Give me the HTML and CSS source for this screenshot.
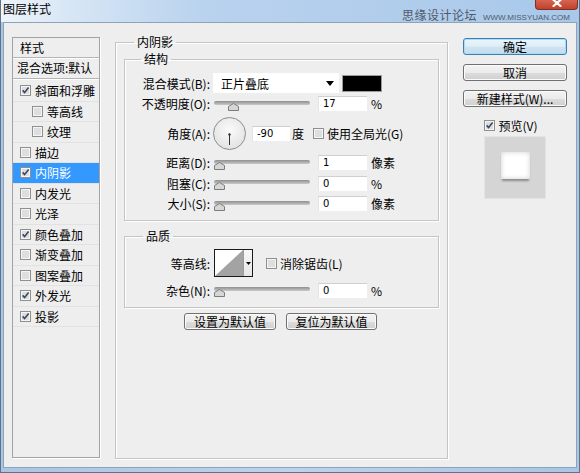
FILE: index.html
```html
<!DOCTYPE html>
<html lang="zh-CN">
<head>
<meta charset="utf-8">
<title>图层样式</title>
<link rel="stylesheet" href="styles.css">
</head>
<body>
<div class="window">
  <div class="titlebar">
    <span class="title">图层样式</span>
    <span class="wm"><span class="wm-cn">思缘设计论坛</span><span class="wm-en">WWW.MISSYUAN.COM</span></span>
    <div class="close"><svg width="12" height="8" viewBox="0 0 12 8"><path d="M2.5 1 L9.5 7 M9.5 1 L2.5 7" stroke="#fff" stroke-width="2.2" stroke-linecap="round"/></svg></div>
  </div>
  <div class="client">
    <div class="styles-panel">
      <div class="sp-head">样式</div>
      <div class="sp-blend">混合选项:默认</div>
      <ul class="sp-list">
        <li><svg class="cb" viewBox="0 0 11 11"><rect x=".5" y=".5" width="10" height="10" fill="#f5f5f5" stroke="#8e8f8f"/><rect x="2" y="2" width="7" height="7" fill="#dedede"/><path d="M2.6 5.4 L4.6 7.6 L8.6 2.6" fill="none" stroke="#3b4a66" stroke-width="1.6"/></svg>斜面和浮雕</li>
        <li class="sub"><svg class="cb" viewBox="0 0 11 11"><rect x=".5" y=".5" width="10" height="10" fill="#f5f5f5" stroke="#8e8f8f"/><rect x="2" y="2" width="7" height="7" fill="#dedede"/></svg>等高线</li>
        <li class="sub"><svg class="cb" viewBox="0 0 11 11"><rect x=".5" y=".5" width="10" height="10" fill="#f5f5f5" stroke="#8e8f8f"/><rect x="2" y="2" width="7" height="7" fill="#dedede"/></svg>纹理</li>
        <li><svg class="cb" viewBox="0 0 11 11"><rect x=".5" y=".5" width="10" height="10" fill="#f5f5f5" stroke="#8e8f8f"/><rect x="2" y="2" width="7" height="7" fill="#dedede"/></svg>描边</li>
        <li class="sel"><svg class="cb" viewBox="0 0 11 11"><rect x=".5" y=".5" width="10" height="10" fill="#f5f5f5" stroke="#8e8f8f"/><rect x="2" y="2" width="7" height="7" fill="#dedede"/><path d="M2.6 5.4 L4.6 7.6 L8.6 2.6" fill="none" stroke="#3b4a66" stroke-width="1.6"/></svg>内阴影</li>
        <li><svg class="cb" viewBox="0 0 11 11"><rect x=".5" y=".5" width="10" height="10" fill="#f5f5f5" stroke="#8e8f8f"/><rect x="2" y="2" width="7" height="7" fill="#dedede"/></svg>内发光</li>
        <li><svg class="cb" viewBox="0 0 11 11"><rect x=".5" y=".5" width="10" height="10" fill="#f5f5f5" stroke="#8e8f8f"/><rect x="2" y="2" width="7" height="7" fill="#dedede"/></svg>光泽</li>
        <li><svg class="cb" viewBox="0 0 11 11"><rect x=".5" y=".5" width="10" height="10" fill="#f5f5f5" stroke="#8e8f8f"/><rect x="2" y="2" width="7" height="7" fill="#dedede"/><path d="M2.6 5.4 L4.6 7.6 L8.6 2.6" fill="none" stroke="#3b4a66" stroke-width="1.6"/></svg>颜色叠加</li>
        <li><svg class="cb" viewBox="0 0 11 11"><rect x=".5" y=".5" width="10" height="10" fill="#f5f5f5" stroke="#8e8f8f"/><rect x="2" y="2" width="7" height="7" fill="#dedede"/></svg>渐变叠加</li>
        <li><svg class="cb" viewBox="0 0 11 11"><rect x=".5" y=".5" width="10" height="10" fill="#f5f5f5" stroke="#8e8f8f"/><rect x="2" y="2" width="7" height="7" fill="#dedede"/></svg>图案叠加</li>
        <li><svg class="cb" viewBox="0 0 11 11"><rect x=".5" y=".5" width="10" height="10" fill="#f5f5f5" stroke="#8e8f8f"/><rect x="2" y="2" width="7" height="7" fill="#dedede"/><path d="M2.6 5.4 L4.6 7.6 L8.6 2.6" fill="none" stroke="#3b4a66" stroke-width="1.6"/></svg>外发光</li>
        <li><svg class="cb" viewBox="0 0 11 11"><rect x=".5" y=".5" width="10" height="10" fill="#f5f5f5" stroke="#8e8f8f"/><rect x="2" y="2" width="7" height="7" fill="#dedede"/><path d="M2.6 5.4 L4.6 7.6 L8.6 2.6" fill="none" stroke="#3b4a66" stroke-width="1.6"/></svg>投影</li>
      </ul>
    </div>

    <fieldset class="group outer">
      <legend>内阴影</legend>
      <fieldset class="group inner struct">
        <legend>结构</legend>
        <div class="row r20">
          <span class="lbl">混合模式(B):</span>
          <div class="select"><span>正片叠底</span><svg width="8" height="5" viewBox="0 0 8 5"><path d="M0 0 H8 L4 5 Z" fill="#000"/></svg></div>
          <span class="swatch"></span>
        </div>
        <div class="row r21">
          <span class="lbl">不透明度(O):</span>
          <div class="slider"><div class="track"></div><svg class="thumb" style="left:14px" width="11" height="8" viewBox="0 0 11 8"><path d="M5.5 .5 L10.5 3.5 V7.5 H.5 V3.5 Z" fill="#d6d6d6" stroke="#7c7c7c"/></svg></div>
          <span class="num">17</span><span class="unit">%</span>
        </div>
        <div class="row r38">
          <span class="lbl">角度(A):</span>
          <div class="dial"><svg width="33" height="33" viewBox="0 0 33 33"><defs><radialGradient id="dg" cx="50%" cy="40%" r="60%"><stop offset="0" stop-color="#fbfbfb"/><stop offset="1" stop-color="#e2e2e2"/></radialGradient></defs><circle cx="16.5" cy="16.5" r="16" fill="url(#dg)" stroke="#8d8d8d"/><path d="M16.5 17.5 V28" stroke="#333" stroke-width="1"/><circle cx="16.5" cy="17.5" r="1.2" fill="#333"/></svg></div>
          <span class="num deg">-90</span><span class="unit u2">度</span>
          <svg class="cb cb-g" viewBox="0 0 11 11"><rect x=".5" y=".5" width="10" height="10" fill="#f5f5f5" stroke="#8e8f8f"/><rect x="2" y="2" width="7" height="7" fill="#dedede"/></svg><span class="cb-text">使用全局光(G)</span>
        </div>
        <div class="row r21">
          <span class="lbl">距离(D):</span>
          <div class="slider"><div class="track"></div><svg class="thumb" style="left:0px" width="11" height="8" viewBox="0 0 11 8"><path d="M5.5 .5 L10.5 3.5 V7.5 H.5 V3.5 Z" fill="#d6d6d6" stroke="#7c7c7c"/></svg></div>
          <span class="num">1</span><span class="unit">像素</span>
        </div>
        <div class="row r20">
          <span class="lbl">阻塞(C):</span>
          <div class="slider"><div class="track"></div><svg class="thumb" style="left:0px" width="11" height="8" viewBox="0 0 11 8"><path d="M5.5 .5 L10.5 3.5 V7.5 H.5 V3.5 Z" fill="#d6d6d6" stroke="#7c7c7c"/></svg></div>
          <span class="num">0</span><span class="unit">%</span>
        </div>
        <div class="row r21">
          <span class="lbl">大小(S):</span>
          <div class="slider"><div class="track"></div><svg class="thumb" style="left:0px" width="11" height="8" viewBox="0 0 11 8"><path d="M5.5 .5 L10.5 3.5 V7.5 H.5 V3.5 Z" fill="#d6d6d6" stroke="#7c7c7c"/></svg></div>
          <span class="num">0</span><span class="unit">像素</span>
        </div>
      </fieldset>

      <fieldset class="group inner quality">
        <legend>品质</legend>
        <div class="row r28">
          <span class="lbl">等高线:</span>
          <div class="contour">
            <svg class="curve" width="28" height="26" viewBox="0 0 28 26"><rect width="28" height="26" fill="#fff"/><path d="M0 26 L28 0 V26 Z" fill="#a3a3a3"/></svg>
            <div class="drop"><svg width="5" height="3" viewBox="0 0 5 3"><path d="M0 0 H5 L2.5 3 Z" fill="#000"/></svg></div>
          </div>
          <svg class="cb cb-aa" viewBox="0 0 11 11"><rect x=".5" y=".5" width="10" height="10" fill="#f5f5f5" stroke="#8e8f8f"/><rect x="2" y="2" width="7" height="7" fill="#dedede"/></svg><span class="cb-text">消除锯齿(L)</span>
        </div>
        <div class="row r20 noise">
          <span class="lbl">杂色(N):</span>
          <div class="slider"><div class="track"></div><svg class="thumb" style="left:0px" width="11" height="8" viewBox="0 0 11 8"><path d="M5.5 .5 L10.5 3.5 V7.5 H.5 V3.5 Z" fill="#d6d6d6" stroke="#7c7c7c"/></svg></div>
          <span class="num">0</span><span class="unit">%</span>
        </div>
      </fieldset>

      <div class="defaults">
        <button class="btn w92">设置为默认值</button>
        <button class="btn w91">复位为默认值</button>
      </div>
    </fieldset>

    <div class="side">
      <button class="btn side-btn primary">确定</button>
      <button class="btn side-btn">取消</button>
      <button class="btn side-btn">新建样式(W)...</button>
      <div class="preview-check">
        <svg class="cb" viewBox="0 0 11 11"><rect x=".5" y=".5" width="10" height="10" fill="#f5f5f5" stroke="#8e8f8f"/><rect x="2" y="2" width="7" height="7" fill="#dedede"/><path d="M2.6 5.4 L4.6 7.6 L8.6 2.6" fill="none" stroke="#3b4a66" stroke-width="1.6"/></svg><span>预览(V)</span>
      </div>
      <div class="preview"><div class="preview-sq"></div></div>
    </div>
  </div>
</div>
</body>
</html>
```
FILE: styles.css
```css
* { box-sizing: border-box; }
html, body { margin: 0; padding: 0; }
body {
  width: 580px; height: 473px; overflow: hidden;
  font-family: "Noto Sans CJK SC", "Noto Sans", sans-serif;
  font-size: 12px; color: #000;
}
.window {
  width: 580px; height: 473px;
  background: linear-gradient(90deg, #aac6e4, #bcd3ec 50%, #a9c6e6);
  display: flex; flex-direction: column;
  border-left: 1px solid #5e7288; border-right: 1px solid #5e7288;
  border-bottom: 1px solid #5e7288;
}
.titlebar {
  position: relative;
  height: 22px; flex: none;
  display: flex; align-items: flex-start;
  background: linear-gradient(90deg, #eef4fa 0%, #d7e6f5 12%, #b9d2ee 35%, #a9c8ea 100%);
}
.title { padding-left: 2px; line-height: 18px; font-size: 12px; color: #000; }
.wm {
  position: relative; z-index: 1;
  margin-left: auto; margin-right: 9px; margin-top: 8px;
  display: flex; align-items: baseline; gap: 6px;
}
.wm-cn { font-size: 12px; line-height: 14px; color: #4f5a68; letter-spacing: 0.5px; }
.wm-en { font-family: "Liberation Sans", Arial, sans-serif; font-size: 8px; color: #4f5a68; }
.close {
  position: absolute; right: 1px; top: -9px;
  width: 43px; height: 19px;
  border: 1px solid #7a3126; border-top: none;
  border-radius: 0 0 4px 4px;
  background: linear-gradient(#e9a597, #d3614c 55%, #c2402b);
  display: flex; align-items: flex-end; justify-content: center; padding-bottom: 2px;
}
.client {
  flex: 1;
  margin: 0 2px 4px 2px;
  background: #eeeeee;
  border: 1px solid #8ea2b8;
  display: flex; align-items: flex-start;
  padding: 12px 0 0 8px;
}

/* left styles list */
.styles-panel {
  width: 88px; height: 421px; margin-top: 2px;
  border: 1px solid #a3a3a3;
  box-shadow: 1px 1px 0 #fff;
  background: #eeeeee;
}
.sp-head {
  height: 20px; line-height: 19px; padding-left: 7px;
  border-bottom: 1px solid #b5b5b5;
  box-shadow: 0 1px 0 #fff;
}
.sp-blend {
  height: 21px; line-height: 20px; padding-left: 4px;
  border-bottom: 1px solid #b5b5b5;
  box-shadow: 0 1px 0 #fff;
  white-space: nowrap;
}
.sp-list { list-style: none; margin: 0; padding: 2px 0 0; }
.sp-list li {
  height: 20.5px;
  display: flex; align-items: center;
  padding-left: 7px;
  border-bottom: 1px solid #e2e2e2;
  white-space: nowrap;
}
.sp-list li.sub { padding-left: 19px; }
.sp-list li.sel { background: #3399ff; color: #fff; }
.cb { width: 11px; height: 11px; flex: none; margin-right: 4px; }

/* group boxes */
.group {
  margin: 0; padding: 0;
  border: 1px solid #c4c4c4;
  box-shadow: 1px 1px 0 #fff, inset 1px 1px 0 #fff;
  min-inline-size: 0;
}
.group legend { padding: 0 3px; line-height: 14px; font-size: 12px; }
.outer {
  width: 333px; height: 424px; margin-left: 15px;
  padding: 3px 0 0 8px;
}
.outer > legend { margin-left: 10px; }
.inner { width: 315px; }
.inner > legend { margin-left: 16px; }
.struct { padding: 7px 0 6px 0; }
.quality { margin-top: 8px; padding: 6px 0 7px 0; }
.quality > legend { margin-left: 18px; }

.row { display: flex; align-items: center; }
.r20 { height: 20px; }
.r21 { height: 21px; }
.r28 { height: 28px; }
.r38 { height: 38px; }
.noise { margin-top: 3px; }
.lbl { width: 85px; text-align: right; white-space: nowrap; flex: none; }

.select {
  margin-left: 3px; width: 126px; height: 20px;
  background: #fff;
  display: flex; align-items: center; justify-content: space-between;
  padding: 0 5px 0 8px;
}
.swatch {
  margin-left: 3px; width: 40px; height: 17px;
  background: #000; border: 1px solid #9a9a9a;
}
.slider { position: relative; margin-left: 4px; width: 96px; height: 14px; }
.track {
  margin-top: 4px; height: 4px; border-radius: 2px;
  background: linear-gradient(#8f8f8f, #c9c9c9);
}
.thumb { position: absolute; top: 6px; }
.num {
  margin-left: 8px; width: 49px; height: 15px;
  background: #fff; border-top: 1px solid #cfcfcf; border-left: 1px solid #e4e4e4;
  font-family: "DejaVu Sans", sans-serif; font-size: 10px; line-height: 14px;
  padding-left: 4px;
}
.unit { margin-left: 4px; font-family: "DejaVu Sans", "Noto Sans CJK SC", sans-serif; font-size: 11px; }
.unit:last-child { font-family: "Noto Sans CJK SC", sans-serif; font-size: 12px; }
.dial { margin-left: 3px; width: 33px; height: 33px; }
.dial svg { display: block; }
.num.deg { margin-left: 6px; width: 38px; }
.u2 { margin-left: 2px; font-family: "Noto Sans CJK SC", sans-serif; font-size: 12px; }
.cb-g { margin-left: 9px; margin-right: 3px; }
.cb-text { white-space: nowrap; }

.contour {
  margin-left: 4px; width: 39px; height: 28px;
  border: 1px solid #1a1a1a;
  display: flex; background: #fff;
}
.curve { display: block; }
.drop {
  flex: 1; border-left: 1px solid #9c9c9c;
  background: linear-gradient(#f7f7f7, #e6e6e6);
  display: flex; align-items: center; justify-content: center;
}
.cb-aa { margin-left: 13px; margin-right: 3px; }

.defaults {
  margin-top: 5px; padding-right: 10px;
  display: flex; justify-content: center; gap: 10px;
}
.btn {
  height: 17px; padding: 0;
  font-family: "Noto Sans CJK SC", sans-serif; font-size: 12px; line-height: 14px; color: #000;
  border: 1px solid #707070; border-radius: 3px;
  background: linear-gradient(#f3f3f3, #ebebeb 50%, #dddddd 51%, #cfcfcf);
  box-shadow: inset 0 0 0 1px #fbfbfb;
}
.w92 { width: 92px; }
.w91 { width: 91px; }

.side { margin-left: 15px; width: 104px; padding-top: 3px; display: flex; flex-direction: column; align-items: center; }
.side-btn { width: 104px; margin-bottom: 9px; }
.side-btn.primary {
  border-color: #3c7fb1;
  background: linear-gradient(#eaf6fd, #dcecf6 50%, #cfe4f1 51%, #c4dcec);
  box-shadow: inset 0 0 0 1px #a9dcf8;
}
.preview-check { margin-top: 1px; height: 16px; display: flex; align-items: center; padding-right: 8px; }
.preview-check .cb { margin-right: 3px; }
.preview {
  margin-top: 3px; width: 62px; height: 63px;
  background: #d5d5d5; border: 1px solid #e4e4e4;
  display: flex; justify-content: center; padding-top: 15px;
}
.preview-sq {
  width: 29px; height: 27px; background: #fff;
  box-shadow: inset 0 0 5px #cfcfcf, 0 3px 2px -1px #8c8c8c;
}
```
